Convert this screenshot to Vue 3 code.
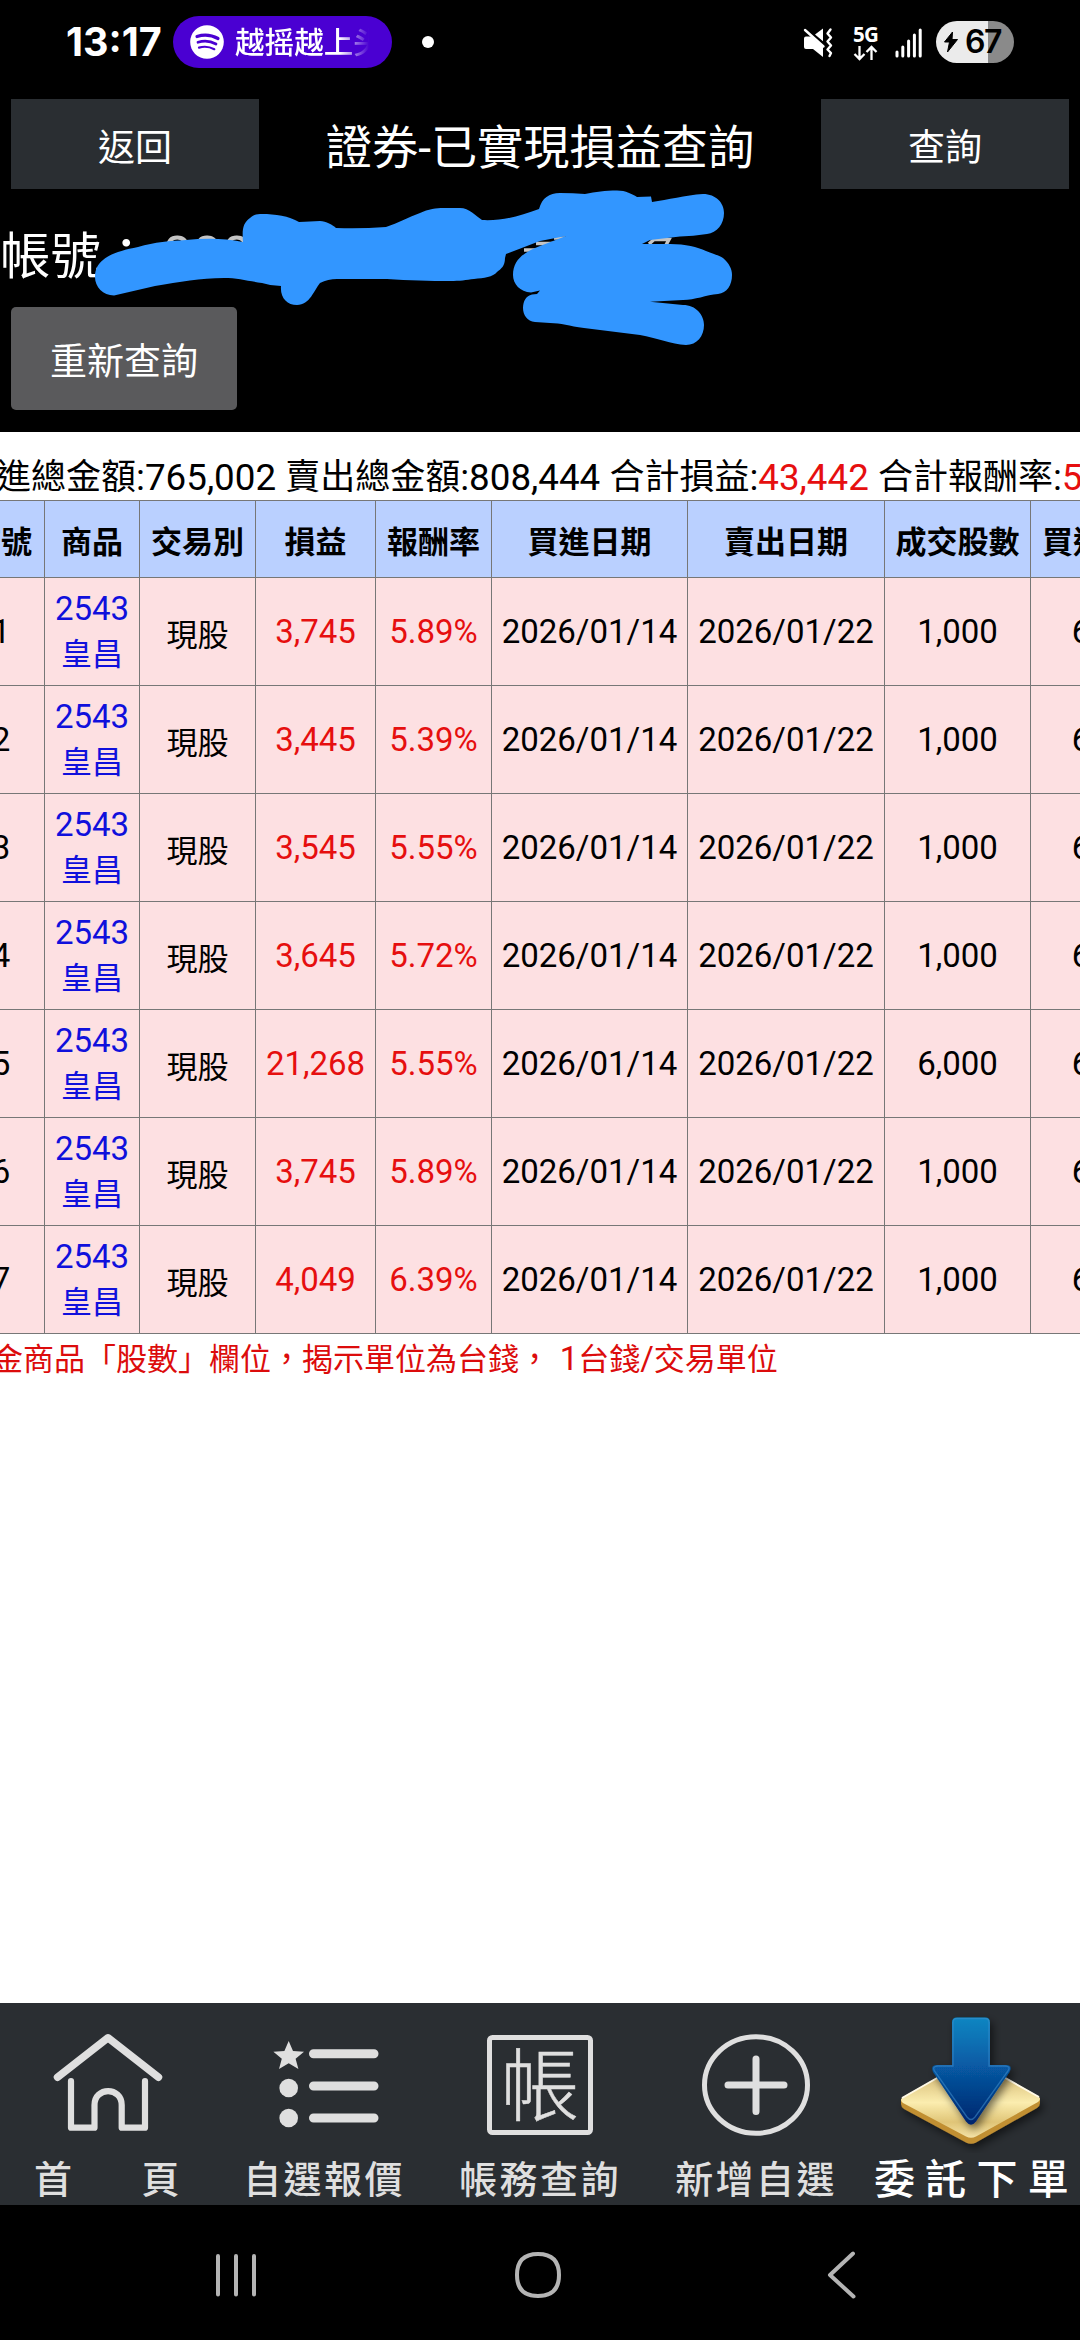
<script setup>
const columns = ['序號', '商品', '交易別', '損益', '報酬率', '買進日期', '賣出日期', '成交股數', '買進價格']

const trades = [
  { profit: '3,745', rate: '5.89%', shares: '1,000' },
  { profit: '3,445', rate: '5.39%', shares: '1,000' },
  { profit: '3,545', rate: '5.55%', shares: '1,000' },
  { profit: '3,645', rate: '5.72%', shares: '1,000' },
  { profit: '21,268', rate: '5.55%', shares: '6,000' },
  { profit: '3,745', rate: '5.89%', shares: '1,000' },
  { profit: '4,049', rate: '6.39%', shares: '1,000' },
]
</script>

<template>
  <div class="screen">
    <header class="status">
      <span class="clock">13:17</span>
      <div class="pill">
        <svg width="34" height="34" viewBox="0 0 34 34">
          <circle cx="17" cy="17" r="16.8" fill="#fff" />
          <g fill="none" stroke="#4a00d2" stroke-linecap="round">
            <path d="M7 11.5Q18 8 28 13.5" stroke-width="3.2" />
            <path d="M8 17.3Q17.500 14.400 26 19" stroke-width="2.700" />
            <path d="M9 22.600Q17 20.300 24.300 24.200" stroke-width="2.200" />
          </g>
        </svg>
        <span class="song">越摇越上头</span>
      </div>
      <i class="dot"></i>
      <div class="indicators">
        <svg class="mute" width="32" height="32" viewBox="0 0 32 32">
          <path d="M2 11.500Q2 9.500 4 9.500H9L21 19.500V30L11 22H4Q2 22 2 20ZM13 7.500L21 1.500V14.300Z" fill="#fff" />
          <path d="M3 3L21.500 19.500" stroke="#fff" stroke-width="2.400" stroke-linecap="round" />
          <path d="M28.500 2.500L25.500 6.500L29 10.500L25.500 14.500L29 18.500L25.500 22.500L29 26L27.500 29" fill="none" stroke="#fff" stroke-width="2.400" stroke-linejoin="round" stroke-linecap="round" />
        </svg>
        <div class="network">
          <span>5G</span>
          <svg width="26" height="16" viewBox="0 0 26 16">
            <path d="M6.500 1V14M1.500 9L6.500 14L11.500 9M18.500 15V2M13.500 7L18.500 2L23.500 7" fill="none" stroke="#fff" stroke-width="2.300" />
          </svg>
        </div>
        <svg class="signal" width="28" height="30" viewBox="0 0 28 30">
          <path d="M2 24V28M7.800 19V28M13.600 13V28M19.400 7V28M25.200 2V28" stroke="#fff" stroke-width="3" stroke-linecap="round" />
        </svg>
        <div class="battery">
          <svg width="16" height="22" viewBox="0 0 16 22">
            <path d="M9.500 1L1.500 11H6.500L4.500 21L14.500 8.500H9Z" fill="#000" stroke="#000" stroke-linejoin="round" />
          </svg>
          <span>67</span>
        </div>
      </div>
    </header>

    <nav class="titlebar">
      <button class="flat">返回</button>
      <h1>證券-已實現損益查詢</h1>
      <button class="flat">查詢</button>
    </nav>

    <section class="account">
      <div class="account-line">帳號：<span class="number">000</span></div>
      <button class="again">重新查詢</button>
      <svg class="marker" width="660" height="170" viewBox="90 185 660 170">
        <path d="M524 250H543M536 243.500H556M554 238H565" stroke="#c4c4c4" stroke-width="3.500" />
        <path d="M649 244L654 239.500H669L666 245" fill="none" stroke="#c4c4c4" stroke-width="3.500" />
        <path fill="#3296ff" d="M95 277C95 269 98 264 103 260C110 254 122 250 138 247C155 242 170 241 186 240C205 238 224 238 243 242C242 229 243 223 250 218C254 214 258 214 262 214C275 214 289 216 299 222C307 222 313 221 320 221C326 221 333 225 336 228Q360 229 386 227C398 223 409 217 420 213C428 209 437 208 443 208H460C469 208 476 216 482 220C503 221 520 216 539 209C542 198 549 193 560 193Q573 193 585 194C596 192 605 190.500 617 190.500C626 190.500 632 194 637 197L651 196.500L652 202C668 200 685 195 703 194C716 194 724 203 724 213C724 224 717 233 707 234Q693 236 680 236.500L650 240L642 244H670C686 244 697 247 706 251C714 254 720 256 723 258C729 263 732 269 732 275C732 285 727 293 718 294C706 295 695 300 683 300L650 301.800L683 305C696 305 704 315 704 325C704 336 697 345 686 345C671 344 657 338 640 335L584 328C569 326 561 323 550 323L535 322C527 321 523 315 523 308C523 301 526 296 532 294.500L537 294L540 290.500L531 292.500C520 292 513 284 513 275C513 258 527 251 540 246L566 236L540 241L506 254L505 258C505 266 501 269 497 272C493 277 484 278 474 279C466 280 460 281 450 281Q420 281 387 279H337Q328 279 320 283C314 290 310 305 297 305C287 305 280 298 281 286Q271 286 262 283C248 281 238 278 224 278C200 278 180 282 155 286L114 295.500C103 295.500 95 287 95 277Z" />
      </svg>
    </section>

    <main>
      <p class="summary">
        <b>買進總金額</b><span>:765,002&nbsp;</span><b>賣出總金額</b><span>:808,444&nbsp;</span><b>合計損益</b><span>:<em>43,442</em>&nbsp;</span><b>合計報酬率</b><span>:<em>5.68%</em></span>
      </p>
      <div class="table">
        <div class="row head">
          <div v-for="name in columns" :key="name">{{ name }}</div>
        </div>
        <div v-for="(t, i) in trades" :key="i" class="row">
          <div>{{ i + 1 }}</div>
          <div class="stock"><span>2543</span><span class="cjk">皇昌</span></div>
          <div class="cjk kind">現股</div>
          <div class="red">{{ t.profit }}</div>
          <div class="red">{{ t.rate }}</div>
          <div>2026/01/14</div>
          <div>2026/01/22</div>
          <div>{{ t.shares }}</div>
          <div>63.5</div>
        </div>
      </div>
      <p class="note">黃金商品「股數」欄位，揭示單位為台錢， <span class="one">1</span>台錢<span>/</span>交易單位</p>
    </main>

    <footer class="tabs">
      <div class="tab">
        <svg viewBox="0 0 216 150" fill="none" stroke="#dfdfdf" stroke-linecap="round" stroke-linejoin="round">
          <path d="M57.500 74.300L108 34.800L158.500 74.300" stroke-width="7.500" />
          <path d="M71 78V124.700H94.500V102C94.500 83.500 121.700 83.500 121.700 102V124.700H145V78" stroke-width="6.200" />
        </svg>
        <span class="label">首<i></i>頁</span>
      </div>
      <div class="tab">
        <svg viewBox="0 0 216 150" fill="#dfdfdf">
          <path d="M72.700 38L77 48L88 48.800L79.600 55.800L82.400 66L72.700 60.300L63 66L65.800 55.800L57.400 48.800L68.400 48Z" />
          <circle cx="72.700" cy="85" r="9.300" />
          <circle cx="72.700" cy="115" r="9.300" />
          <path d="M97.500 50.700H158M97.500 83H158M97.500 115H158" stroke="#dfdfdf" stroke-width="9" stroke-linecap="round" />
        </svg>
        <span class="label">自選報價</span>
      </div>
      <div class="tab">
        <svg viewBox="0 0 216 150">
          <rect x="57.500" y="34.500" width="101" height="95" rx="3" fill="none" stroke="#dfdfdf" stroke-width="5" />
          <text x="108" y="111.500" class="glyph" text-anchor="middle">帳</text>
        </svg>
        <span class="label">帳務查詢</span>
      </div>
      <div class="tab">
        <svg viewBox="0 0 216 150" fill="none" stroke="#dfdfdf" stroke-linecap="round">
          <ellipse cx="108" cy="82" rx="51.500" ry="48.300" stroke-width="5" />
          <path d="M80 82H136M108 56V108.500" stroke-width="7" />
        </svg>
        <span class="label">新增自選</span>
      </div>
      <div class="tab order">
        <svg viewBox="0 0 216 150">
          <defs>
            <linearGradient id="blue" x1="0" y1="0" x2="0" y2="1">
              <stop offset="0" stop-color="#0786c2" />
              <stop offset=".45" stop-color="#075aa4" />
              <stop offset="1" stop-color="#02246c" />
            </linearGradient>
            <linearGradient id="gold" x1="0" y1="0" x2="0" y2="1">
              <stop offset=".2" stop-color="#d8bd78" />
              <stop offset=".55" stop-color="#fbedaf" />
              <stop offset=".8" stop-color="#e0c577" />
              <stop offset="1" stop-color="#f4e2a6" />
            </linearGradient>
            <filter id="shade" x="-20%" y="-20%" width="150%" height="150%">
              <feDropShadow dx="3" dy="4" stdDeviation="4" flood-color="#000" flood-opacity=".55" />
            </filter>
          </defs>
          <path d="M37 96V101Q37 104 40 106L102 139.500Q107 142 112 139.500L173 105Q176 103 176 100V95Z" fill="#c18f33" filter="url(#shade)" />
          <path d="M39 94L102 58Q107 55 112 58L174 93Q178 96 174 99L112 133.500Q107 136 102 133.500L39 100Q35 97 39 94Z" fill="url(#gold)" />
          <path d="M38 95L102 58.500Q107 55.500 112 58.500L175 94" fill="none" stroke="#fff9e6" stroke-width="2" />
          <path d="M93 14.500H121Q126 14.500 126 19.500V62H142Q149 62 145.500 69L112 118.500Q107 125 102 118.500L69 69Q66 62 73 62H88V19.500Q88 14.500 93 14.500Z" fill="url(#blue)" filter="url(#shade)" />
          <path d="M93 15.500H121Q125 15.500 125 19.500V63H141Q147 63 144 68L111 114Q107 119 103 114L70.500 68Q68 63 74 63H89V19.500Q89 15.500 93 15.500Z" fill="none" stroke="#3f8fcf" stroke-opacity=".55" stroke-width="1.300" />
        </svg>
        <span class="label">委託下單</span>
      </div>
    </footer>

    <div class="system">
      <svg width="1080" height="135" viewBox="0 0 1080 135" fill="none" stroke="#b4b4b4" stroke-linecap="round" stroke-linejoin="round">
        <path d="M218 51V89.500M236 51V89.500M254 51V89.500" stroke-width="4" />
        <path d="M538 49C551 49 559 55 559 70S551 91 538 91S517 85 517 70S525 49 538 49Z" stroke-width="4" />
        <path d="M853 48.500L830 70L853.500 91.500" stroke-width="4" />
      </svg>
    </div>
  </div>
</template>

<style>
body { margin: 0; background: #000; overflow: hidden; }
</style>

<style scoped>
.screen {
  width: 1080px;
  height: 2340px;
  overflow: hidden;
  display: flex;
  flex-direction: column;
  background: #000;
  color: #fff;
  font-family: Roboto, "Noto Sans CJK TC", sans-serif;
}
button { border: 0; padding: 0; margin: 0; color: #fff; font: inherit; }
p, h1 { margin: 0; font-weight: 400; }
b, em, i { font-weight: 400; font-style: normal; }
svg { display: block; flex: none; }

.status { height: 99px; display: flex; align-items: flex-start; box-sizing: border-box; padding-left: 66px; }
.clock { width: 107px; font: 700 39.500px/52px Inter, sans-serif; letter-spacing: 0; margin-top: 16px; }
.pill { width: 219px; height: 52px; margin-top: 16px; border-radius: 26px; background: #4a00d2; display: flex; align-items: center; box-sizing: border-box; padding-left: 17px; }
.song {
  margin: -2px 0 0 11px; width: 134px; overflow: hidden; white-space: nowrap;
  font: 500 29.600px/50px "Noto Sans CJK SC", sans-serif;
  -webkit-mask-image: linear-gradient(90deg, #000 78%, transparent 100%);
  mask-image: linear-gradient(90deg, #000 78%, transparent 100%);
}
.dot { width: 12px; height: 12px; border-radius: 50%; background: #fff; margin: 36px 0 0 30px; }
.indicators { display: flex; margin-left: 368px; }
.mute { margin-top: 27px; }
.network { margin: 26px 0 0 19px; width: 26px; }
.network span { display: block; font: 700 20.500px/17px "Noto Sans", sans-serif; letter-spacing: -0.8px; }
.network svg { margin-top: 2px; }
.signal { margin: 28px 0 0 16px; }
.battery {
  width: 78px; height: 42px; margin: 21px 0 0 13px; border-radius: 21px;
  background: linear-gradient(90deg, #ebebeb 52px, #8a8a8a 52px);
  color: #000; display: flex; align-items: center; padding-left: 7px; box-sizing: border-box;
}
.battery span { margin-left: 6px; font: 600 32px/42px Inter, sans-serif; letter-spacing: -1.500px; }

.titlebar { display: flex; height: 90px; padding: 0 11px; align-items: stretch; }
.flat { width: 248px; background: #2a2e32; font-size: 37px; padding-top: 2px; }
h1 { flex: 1; text-align: center; font-size: 46.200px; line-height: 98px; white-space: nowrap; }

.account { position: relative; height: 243px; }
.account-line { height: 118px; font-size: 50.500px; line-height: 135px; white-space: nowrap; }
.number { margin-left: 11px; color: #c4c4c4; font-size: 53px; }
.again { display: block; width: 226px; height: 103px; margin-left: 11px; border-radius: 5px; background: #5a5a5c; font-size: 37px; }
.marker { position: absolute; left: 90px; top: -4px; }

main { height: 1571px; background: #fff; color: #000; overflow: hidden; }
.summary { height: 68px; box-sizing: border-box; padding-top: 17px; margin-left: -39px; display: flex; white-space: nowrap; line-height: 57px; }
.summary b { font-size: 35px; }
.summary span { font-size: 36.750px; }
em, .red { color: #e60f0f; }

.table { width: 1220px; margin-left: -42px; border-top: 1px solid #777; background: #fde0e2; }
.row {
  display: grid;
  grid-template-columns: 87px 95px 116px 120px 116px 196px 197px 146px 147px;
  height: 108px; box-sizing: border-box; border-bottom: 1px solid #777;
  font-size: 33px;
}
.row > div { display: flex; align-items: center; justify-content: center; border-right: 1px solid #777; white-space: nowrap; }
.row.head { height: 77px; background: #bad0ff; font-size: 31px; font-weight: 700; }
.row.head > div { padding-top: 0; }
.cjk { font-size: 31px; }
.row > .kind { padding-top: 1px; }
.row > .stock { flex-direction: column; color: #1010dc; line-height: 46px; }
.note { margin-left: -39px; padding-top: 1px; font-size: 31px; line-height: 48px; color: #dc0c0c; white-space: nowrap; }
.note span { font-size: 33px; }
.note .one { margin-left: 2px; }

.tabs { display: flex; height: 202px; background: #2a2e32; }
.tab { width: 216px; flex: none; height: 202px; overflow: hidden; }
.tab svg { width: 216px; height: 150px; }
.glyph { font: 300 79px "Noto Sans CJK TC", sans-serif; fill: #dfdfdf; stroke: #dfdfdf; stroke-width: .5px; }
.label { display: flex; justify-content: center; font-size: 38px; line-height: 54px; font-weight: 500; letter-spacing: 2.400px; color: #dfdfdf; white-space: nowrap; }
.label i { width: 67px; }
.order .label { font-size: 41px; letter-spacing: 10.200px; color: #fff; padding-left: 9px; }

.system { height: 135px; }
</style>
